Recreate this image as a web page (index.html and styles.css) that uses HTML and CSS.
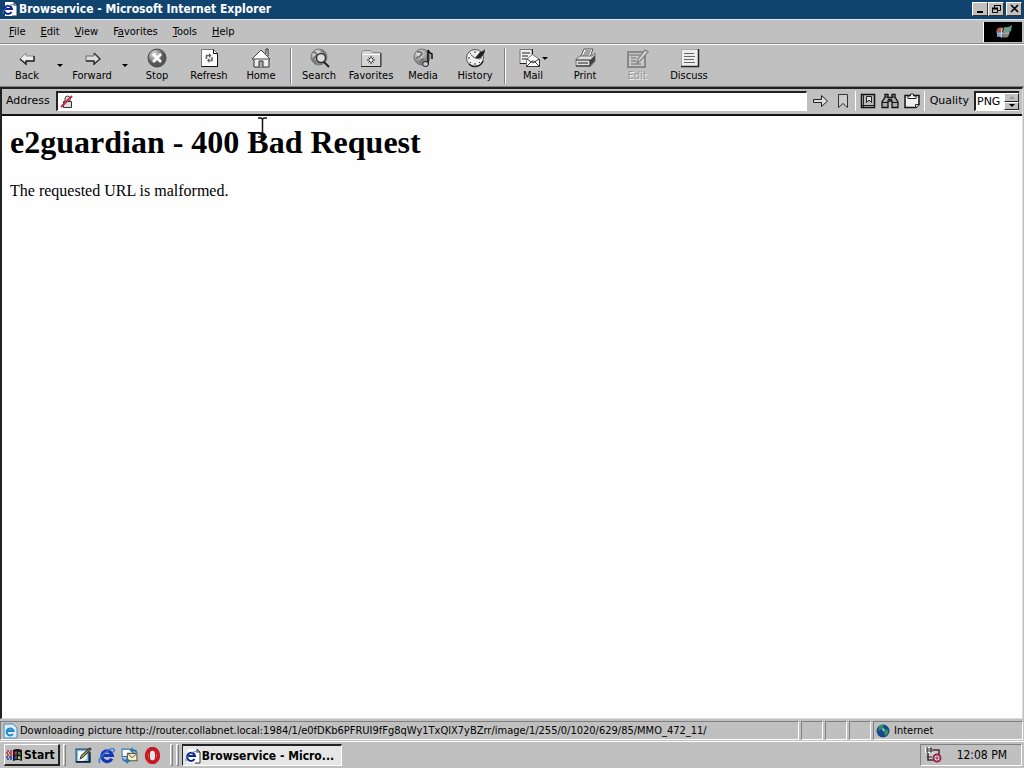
FILE: index.html
```html
<!DOCTYPE html>
<html lang="en">
<head>
<meta charset="utf-8">
<title>Browservice - Microsoft Internet Explorer</title>
<link rel="stylesheet" href="styles.css">
</head>
<body>
<svg class="defs" width="0" height="0" aria-hidden="true">
  <defs>
    <radialGradient id="ball" cx="35%" cy="30%"><stop offset="0" stop-color="#eee"/><stop offset="1" stop-color="#555"/></radialGradient>
    <radialGradient id="globe" cx="35%" cy="30%"><stop offset="0" stop-color="#f4f4f4"/><stop offset="1" stop-color="#888"/></radialGradient>
    <symbol id="ie-page" viewBox="0 0 16 16">
      <path d="M3 1h9l3 3v11H3z" fill="#fff"/><path d="M12 1l3 3v11h-5M12 1v3h3" fill="none" stroke="#333"/>
      <path d="M9.500 11A4 4 0 1 1 10 8H3" fill="none" stroke="#12238f" stroke-width="2"/><path d="M1 13C0 9 8 2 12 4" fill="none" stroke="#3f7fc4"/>
    </symbol>
  </defs>
</svg>
<div class="window">
  <header class="titlebar">
    <svg class="i16" aria-hidden="true"><use href="#ie-page"/></svg>
    <span class="title">Browservice - Microsoft Internet Explorer</span>
    <div class="window-buttons">
      <button aria-label="Minimize"><svg width="11" height="10"><path d="M2 8h6" stroke="#000" stroke-width="2"/></svg></button>
      <button aria-label="Restore"><svg width="11" height="10"><path d="M3.500 4V1.500h6v5H7M3 1.500h7M1.500 4.500h5v4h-5z" fill="none" stroke="#000"/><path d="M1 4.500h6" stroke="#000" stroke-width="2"/></svg></button>
      <button class="close" aria-label="Close"><svg width="11" height="10"><path d="M2 1l7 7M9 1L2 8" stroke="#000" stroke-width="1.600"/></svg></button>
    </div>
  </header>
  <div class="menubar">
    <nav class="menus">
      <button><u>F</u>ile</button><button><u>E</u>dit</button><button><u>V</u>iew</button><button>F<u>a</u>vorites</button><button><u>T</u>ools</button><button><u>H</u>elp</button>
    </nav>
    <div class="throbber"><svg width="38" height="22" aria-hidden="true"><path d="M13 7q3-3 6-1l-1 5q-3-2-6 0z" fill="#b45b4f"/><path d="M20 5q4 1 8-2l-1 6q-4 3-8 1z" fill="#6b9c86"/><path d="M13 11q3-1 6 0l-1 5q-3-2-5-1z" fill="#6d9fd0"/><path d="M19 11q3 1 7-1l-2 5q-3 1-6 0z" fill="#91836e"/><path d="M18 6l-1 9M13 11h12" stroke="#d8dce0"/></svg></div>
  </div>
  <div class="toolbar">
    <button class="tool"><svg viewBox="0 0 24 20"><path d="M5 11l6-6v3h8v5h-8v4z" fill="#eee" stroke="#888"/><path d="M5 11l6 5v-3h8V8" fill="none" stroke="#222" stroke-width="1.400"/></svg>Back</button>
    <button class="drop" aria-label="Back history"><i class="caret"></i></button>
    <button class="tool"><svg viewBox="0 0 24 20"><path d="M20 11l-6-6v3H6v5h8v4z" fill="#ddd" stroke="#666"/><path d="M6 13h8v3l6-5-6-6" fill="none" stroke="#333" stroke-width="1.400"/></svg>Forward</button>
    <button class="drop" aria-label="Forward history"><i class="caret"></i></button>
    <button class="tool"><svg viewBox="0 0 24 20"><circle cx="12" cy="10" r="9" fill="url(#ball)" stroke="#444"/><path d="M8 6l8 8M16 6l-8 8" stroke="#fff" stroke-width="2.500"/></svg>Stop</button>
    <button class="tool"><svg viewBox="0 0 24 20"><path d="M4.500 1.500h12l4 4v13h-16z" fill="#fff" stroke="#777"/><path d="M16.500 1.500v4h4v13h-16" fill="none" stroke="#111"/><path d="M9.500 11V7.500H12M15 9v3.500h-2.500" fill="none" stroke="#666" stroke-width="1.600"/><path d="M12 5l2.500 2.500L12 10zM12.500 10L10 12.500l2.500 2.500z" fill="#555"/></svg>Refresh</button>
    <button class="tool"><svg viewBox="0 0 24 20"><path d="M17 6V1h2v7" fill="#fff" stroke="#222"/><path d="M5 10h15v9H5z" fill="#eee" stroke="#333"/><path d="M3 11l9-9 9 9z" fill="#fff" stroke="#444"/><path d="M10 19v-6h4v6" fill="#aaa" stroke="#333"/></svg>Home</button>
    <span class="sep"></span>
    <button class="tool"><svg viewBox="0 0 24 20"><circle cx="12" cy="9" r="8" fill="url(#globe)" stroke="#777"/><path d="M6 4q3 0 4 3l-4 4M5 12q3 0 4 4M14 2q3 2 5 5" fill="none" stroke="#777" stroke-width="2"/><circle cx="14" cy="10" r="4.500" fill="#ddd" stroke="#333" stroke-width="1.500"/><path d="M17 14l5 5" stroke="#222" stroke-width="2"/></svg>Search</button>
    <button class="tool"><svg viewBox="0 0 24 20"><path d="M2.500 18.500V4.500l2-2h7l2 2h8v14z" fill="#d4d4d4" stroke="#888"/><path d="M3 6.500h18" stroke="#fff"/><path d="M2 18.500h20V5" fill="none" stroke="#222"/><path d="M12 8v8M8 12h8M9.500 9.500l5 5M14.500 9.500l-5 5" stroke="#222"/><circle cx="12" cy="12" r="1.500" fill="#fff"/></svg>Favorites</button>
    <button class="tool"><svg viewBox="0 0 24 20"><circle cx="11" cy="9" r="8" fill="url(#globe)" stroke="#777"/><path d="M6 4q4-1 5 2l-3 3-3 1M9 15q0-3 4-4" fill="none" stroke="#777" stroke-width="2"/><path d="M17 16V2q1 3 4 4v5" fill="none" stroke="#111" stroke-width="1.500"/><ellipse cx="14.500" cy="16" rx="3" ry="2.500" fill="#ccc" stroke="#111"/></svg>Media</button>
    <button class="tool"><svg viewBox="0 0 24 20"><circle cx="12" cy="10" r="8.500" fill="#eee" stroke="#555"/><path d="M12 3v2M12 15v2M5 10h2M17 10h2M7 5l1 1M7 15l1-1M17 15l-1-1" stroke="#333"/><path d="M12 10l5-6q4-1 5-3 0 6-5 9z" fill="#222"/><path d="M8 7l4 3 5 1" fill="none" stroke="#555"/><path d="M6 16a8.500 8.500 0 0 0 14-3" fill="none" stroke="#222" stroke-width="1.500"/></svg>History</button>
    <span class="sep"></span>
    <button class="tool mail"><svg viewBox="3 0 24 20"><path d="M2 1.500h12v14H2z" fill="#eee" stroke="#777"/><path d="M14.500 1v8M2 15.500h7M4 5h8M4 8h6M4 11h5" fill="none" stroke="#222"/><path d="M8.500 11.500l6-5 7 5v7h-13z" fill="#fff" stroke="#777"/><path d="M9 18l5-5h2l5 5M9 11l6 4 6-4M8 18.500h13.500V11" fill="none" stroke="#333"/></svg>Mail<i class="caret"></i></button>
    <button class="tool"><svg viewBox="0 0 24 20"><path d="M8 8l3-7h9l-3 8z" fill="#fff" stroke="#555"/><path d="M12 3h6M11 5h6M10 7h6" stroke="#444"/><path d="M3 11l4-3h12l3-3v8l-4 5H3z" fill="#ddd" stroke="#777"/><path d="M17 12l5-5v6l-5 5z" fill="#444"/><path d="M3 12h14v6H3M5 15h10" fill="none" stroke="#222"/></svg>Print</button>
    <button class="tool" disabled><svg viewBox="0 0 24 20"><path d="M3 4h17v15H3z" fill="#c8c8c8" stroke="#888" stroke-width="2"/><path d="M4 7h12M6 10h5M6 13h5M6 16h10M12 15l1-4 7-9 3 2-8 9z" fill="#ddd" stroke="#888" stroke-width="1.500"/></svg>Edit</button>
    <button class="tool"><svg viewBox="0 0 24 20"><path d="M4 1h17v18H4z" fill="#eee"/><path d="M4.500 19V1.500H21" fill="none" stroke="#aaa"/><path d="M4 18.500h17.500V1" fill="none" stroke="#222" stroke-width="1.500"/><path d="M7 5.500h10M7 8.500h11M7 11.500h10M7 14.500h11" stroke="#666"/></svg>Discuss</button>
  </div>
  <main class="page">
    <form class="addressbar">
      <label for="address">Address</label>
      <div class="address-field">
        <svg width="14" height="14" aria-hidden="true"><path d="M5 6V4q0-3 2.500-3T10 4v2M3.500 6.500h8v6h-8z" fill="#ddd" stroke="#333"/><path d="M1 12L12 1" stroke="#c72848" stroke-width="2.200"/></svg>
        <input id="address" type="text">
      </div>
      <div class="actions">
        <button type="button" aria-label="Go"><svg width="18" height="16"><path d="M1.500 6.500h8v-4l6 5.500-6 5.500v-4h-8z" fill="#ddd" stroke="#222"/></svg></button>
        <button type="button" aria-label="Bookmark"><svg width="18" height="16"><path d="M4.500 1.500h9v13L9 10.500l-4.500 4z" fill="#ccc" stroke="#333"/></svg></button>
      </div>
      <div class="actions ruled">
        <button type="button" aria-label="Bookmarks"><svg width="18" height="16"><path d="M2.500 1.500h13v13h-13z" fill="#bbb" stroke="#111" stroke-width="1.500"/><path d="M4.500 1v13M3 12.500h12" stroke="#222"/><path d="M7.500 3.500h5v6L10 7 7.500 9.500z" fill="#ddd" stroke="#222"/></svg></button>
        <button type="button" aria-label="Find"><svg width="18" height="16"><path d="M4 1.500h3v3h4v-3h3V4l3 5v5.500h-6V8H7v6.500H1V9l3-5z" fill="#aaa" stroke="#111" stroke-width="1.300"/><path d="M1 9.500h6M11 9.500h6M7 6.500h4M4 4h3M11 4h3" stroke="#111"/></svg></button>
        <button type="button" aria-label="Clipboard"><svg width="18" height="16"><path d="M2 2.500h14v9l-3 3H2z" fill="#eee" stroke="#111" stroke-width="1.500"/><path d="M5 5.500V3h2.500V1h3v2H13v2.500zM12.500 14.500v-3h3.500" fill="#fff" stroke="#222"/></svg></button>
      </div>
      <div class="quality ruled">
        <label for="quality">Quality</label>
        <div class="quality-field">
          <select id="quality"><option>PNG</option></select>
          <span class="spinner"><button type="button" disabled aria-label="Higher quality"><i class="caret up"></i></button><button type="button" aria-label="Lower quality"><i class="caret"></i></button></span>
        </div>
      </div>
    </form>
    <article class="document">
      <h1>e2guardian - 400 Bad Request</h1>
      <p>The requested URL is malformed.</p>
      <svg class="cursor" width="9" height="21" aria-hidden="true"><path d="M0 1h3l1.500 1L6 1h3M0 20h3l1.500-1L6 20h3M4.500 2v17" fill="none" stroke="#111" stroke-width="1.500"/></svg>
    </article>
  </main>
  <footer class="statusbar">
    <div class="pane message"><svg class="i16" aria-hidden="true" viewBox="0 0 16 16"><path d="M2 1h9l4 4v10H2z" fill="#dcecf7" stroke="#4b8cba"/><path d="M11 11A3.500 3.500 0 1 1 11.500 8H5" fill="none" stroke="#2487c8" stroke-width="2"/></svg><span>Downloading picture http://router.collabnet.local:1984/1/e0fDKb6PFRUI9fFg8qWy1TxQlX7yBZrr/image/1/255/0/1020/629/85/MMO_472_11/</span></div>
    <div class="pane"></div><div class="pane"></div><div class="pane"></div>
    <div class="pane zone"><svg width="14" height="14" viewBox="0 0 14 14" aria-hidden="true"><circle cx="7" cy="7" r="6.500" fill="#17478f"/><path d="M3 2q3-2 5 0L6 5 2 7zM8 5l4 1v4l-3 2-1-4z" fill="#2f9259"/><path d="M6 4l3 1-2 3z" fill="#8bd0e3"/></svg>Internet</div>
  </footer>
</div>
<div class="taskbar">
  <button class="start"><svg width="17" height="14" viewBox="0 0 17 14" aria-hidden="true"><path d="M7 2q4-2 9 0v11q-4-2-9 0z" fill="#111"/><path d="M8.500 4q1-1 2.500-.5v3L8.500 7z" fill="#b83343"/><path d="M12 4q1-.5 2.500 0v3L12 6.500z" fill="#438c50"/><path d="M8.500 8q1-.5 2.500-.5V11l-2.500.5z" fill="#304fae"/><path d="M12 8q1 0 2.500.5v3L12 11z" fill="#cfb84b"/><path d="M1 3h2M4 3h2M0 5h2M3 5h3M1 7h2M4 7h2" stroke="#b4273d" stroke-width="1.500"/><path d="M0 9h2M3 9h3M1 11h2M4 11h2" stroke="#233b9c" stroke-width="1.500"/></svg>Start</button>
  <span class="grip"></span>
  <nav class="quick">
    <button aria-label="Show desktop"><svg class="i17" viewBox="0 0 16 16"><path d="M1 2h12v12H1z" fill="#8dc4dc" stroke="#164e73"/><path d="M3 4h8v7l-3 2H3z" fill="#fff"/><path d="M1 14h13V5" fill="none" stroke="#123" stroke-width="1.500"/><path d="M5 11l1-3 8-7 1 1-8 8z" fill="#e2ca60" stroke="#333"/></svg></button>
    <button aria-label="Internet Explorer"><svg class="i17" viewBox="0 0 16 16"><path d="M13 11A5 5 0 1 1 13.500 8H4" fill="none" stroke="#1535ba" stroke-width="3"/><path d="M2 15Q-1 12 6 6t9-4q1 1-1 3" fill="none" stroke="#3478d4" stroke-width="1.300"/></svg></button>
    <button aria-label="Outlook Express"><svg class="i17" viewBox="0 0 16 16"><path d="M1 2h7l3 3v4H1z" fill="#fff" stroke="#287db4"/><path d="M6 6h9v7H6z" fill="#f9efb9" stroke="#555"/><path d="M6 6l4.500 4L15 6" fill="none" stroke="#777"/><path d="M1 8q0 4 4 4v-2l4 3-4 3v-2Q0 14 1 8zM15 6q1-4-4-4V0L8 3l3 2V4q3 0 4 2z" fill="#2876b0"/></svg></button>
    <button aria-label="Opera"><svg class="i17" viewBox="0 0 16 16"><ellipse cx="8" cy="8" rx="5.500" ry="6.500" fill="#e6e6e6" stroke="#cf1723" stroke-width="3.500"/><ellipse cx="8" cy="8" rx="3" ry="5.500" fill="none" stroke="#a11923"/></svg></button>
  </nav>
  <span class="grip"></span><span class="grip thin"></span>
  <button class="task"><svg class="i16" aria-hidden="true"><use href="#ie-page"/></svg><span>Browservice - Micro...</span></button>
  <div class="tray"><svg width="17" height="16" viewBox="0 0 17 16" aria-hidden="true"><path d="M5 3h9v10H3V4z" fill="#ccc" stroke="#412938" stroke-width="1.500"/><path d="M0 0h8v6H0z" fill="#fff"/><path d="M1 1h2v4H1M1 3h2M5 1h2v4H5zM5 3h2" fill="none" stroke="#222"/><path d="M2 10h5" stroke="#222"/><circle cx="12" cy="11" r="3.500" fill="#fff" stroke="#982448" stroke-width="2"/><path d="M12 9v4M10 11h4" stroke="#982448"/></svg><time>12:08 PM</time></div>
</div>
</body>
</html>
```
FILE: styles.css
```css
* { box-sizing: border-box; }
body { margin: 0; min-height: 100vh; display: flex; flex-direction: column; background: #c0c0c0; color: #000; font: 11px/14px "DejaVu Sans Condensed", "DejaVu Sans", sans-serif; }
button { margin: 0; padding: 0; border: 0; background: none; color: inherit; font: inherit; }
svg { flex: none; display: block; }
.defs { position: absolute; }
.i16 { width: 16px; height: 16px; }
.i17 { width: 17px; height: 17px; }
.window { flex: 1; display: flex; flex-direction: column; }
.titlebar { display: flex; align-items: center; height: 19px; padding: 0 2px 2px; background: #10446f; color: #fff; font-size: 12px; font-weight: bold; }
.title { flex: 1; padding-left: 1px; }
.window-buttons { display: flex; }
.window-buttons button { display: flex; justify-content: center; align-items: center; width: 16px; height: 14px; background: #c0c0c0; border: 1px solid; border-color: #fff #333 #333 #fff; }
.window-buttons .close { margin-left: 2px; }
.menubar { display: flex; height: 25px; padding: 2px 2px 1px 1px; border-top: 1px solid #e8e8e8; border-bottom: 1px solid #888; }
.menus { flex: 1; display: flex; align-items: center; gap: 15px; padding-left: 8px; }
.throbber { border-left: 1px solid #fff; background: #000; }
.toolbar { display: flex; height: 43px; padding: 3px 0 2px 1px; border-top: 1px solid #fff; border-bottom: 1px solid #808080; }
.tool { position: relative; display: flex; flex-direction: column; align-items: center; width: 52px; gap: 1px; }
.tool svg { width: 24px; height: 20px; overflow: visible; }
.tool:disabled { color: #999; text-shadow: 1px 1px #eee; }
.drop { width: 13px; padding-bottom: 1px; display: grid; place-items: center; }
.caret { width: 0; height: 0; border: 3px solid transparent; border-top-color: #000; border-bottom: 0; }
.caret.up { border-top: 0; border-bottom: 3px solid #999; }
.mail .caret { position: absolute; top: 9px; right: 11px; }
.sep { width: 2px; margin: 0 1px 0 3px; border-left: 1px solid #808080; border-right: 1px solid #fff; }
.page { flex: 1; display: flex; flex-direction: column; margin: 0 1px 2px 0; border: 1px solid #222; border-top-width: 2px; border-left: 2px solid #222; border-right-color: #ddd; border-bottom-color: #ddd; background: #fefefe; }
.addressbar { display: flex; height: 27px; padding: 2px 3px 3px 4px; background: #c0c0c0; border-bottom: 2px solid #111; align-items: stretch; font-family: "DejaVu Sans", sans-serif; }
.addressbar > label, .actions, .quality { display: flex; align-items: center; }
.address-field { flex: 1; display: flex; align-items: center; margin: 0 2px 0 6px; padding-left: 2px; background: #fff; border: 1px solid #fff; border-top: 2px solid #222; border-left: 2px solid #222; }
.address-field input { flex: 1; min-width: 0; padding: 0 4px; border: 0; outline: 0; font: inherit; background: none; }
.actions { gap: 4px; padding: 0 3px; }
.ruled { border-left: 1px solid #fff; }
.quality { padding-left: 5px; gap: 5px; }
.quality-field { display: flex; height: 20px; border: 2px solid #222; border-right: 0; border-bottom: 1px solid #fff; background: #fff; }
.quality-field select { appearance: none; width: 28px; padding: 0 1px; border: 0; background: #fff; color: #000; font: inherit; }
.spinner { display: grid; grid-template-rows: 1fr 1fr; width: 15px; }
.spinner button { display: grid; place-items: center; background: #c0c0c0; border: 1px solid; border-color: #fff #222 #222 #fff; }
.document { position: relative; padding: 8px; font: 16px/18px "Liberation Serif", "Times New Roman", serif; }
.document h1 { margin: 0; font-size: 32px; line-height: 36px; }
.document p { margin: 22px 0 0; }
.cursor { position: absolute; left: 256px; top: 1px; }
.statusbar { display: flex; gap: 2px; height: 20px; padding: 0 1px 1px 0; }
.pane { display: flex; align-items: center; width: 22px; border: 1px solid; border-color: #808080 #fff #fff #808080; }
.message { flex: 1; min-width: 0; padding-left: 1px; gap: 2px; white-space: nowrap; }
.zone { width: 150px; padding-left: 2px; gap: 4px; }
.taskbar { display: flex; align-items: stretch; height: 27px; padding: 2px 2px 2px 4px; border-top: 1px solid #fff; font-size: 12px; }
.start { display: flex; align-items: center; padding: 0 3px 0 1px; gap: 1px; border: 1px solid; border-color: #fff #222 #222 #fff; border-right-width: 2px; border-bottom-width: 2px; font-weight: bold; }
.grip { width: 3px; margin: 0 3px; border: 1px solid; border-color: #fff #808080 #808080 #fff; }
.grip.thin { margin-left: 0; }
.quick { display: flex; align-items: center; gap: 6px; padding: 0 6px; }
.task { display: flex; align-items: center; gap: 1px; width: 160px; padding: 1px 2px 0; background: #e6e6e6; border: 1px solid; border-color: #222 #fff #fff #222; border-top-width: 2px; font-weight: bold; white-space: nowrap; }
.tray { display: flex; align-items: center; justify-content: space-between; width: 102px; margin-left: auto; padding: 0 14px 0 4px; border: 1px solid; border-color: #808080 #fff #fff #808080; }
```
